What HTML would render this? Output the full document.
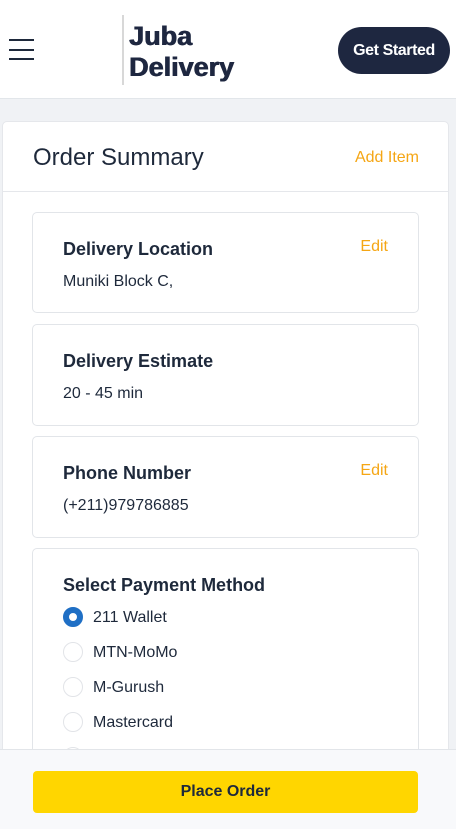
<!DOCTYPE html>
<html><head><meta charset="utf-8"><style>
*{box-sizing:border-box;margin:0;padding:0}
body{width:456px;height:829px;overflow:hidden;background:#f0f2f5;font-family:"Liberation Sans",sans-serif;color:#1e293b;position:relative}
.hdr{position:absolute;left:0;top:0;width:456px;height:99px;background:#fff;border-bottom:1px solid #e2e6ea}
.hb{position:absolute;left:9px;width:25px;height:2px;background:#1e293b}
.sep{position:absolute;left:122px;top:15px;width:2px;height:70px;background:#d8d8d8}
.logo{position:absolute;left:129px;top:21px;font-weight:900;font-size:27px;line-height:31px;color:#1e2740;text-shadow:0.6px 0 0 #1e2740,-0.3px 0 0 #1e2740}
.gs{position:absolute;left:338px;top:27px;width:112px;height:47px;border-radius:24px;background:#1e2740;color:#fff;font-size:16px;font-weight:bold;text-align:center;line-height:47px;letter-spacing:-0.4px}
.card{position:absolute;left:2px;top:121px;width:447px;height:700px;background:#fff;border:1px solid #e5e7eb;border-radius:5px}
.ch{position:absolute;left:0;top:0;width:100%;height:70px;border-bottom:1px solid #e5e7eb}
.ch h1{position:absolute;left:30px;top:22px;font-size:24px;font-weight:normal;color:#1e293b}
.ch a{position:absolute;right:29px;top:27px;font-size:16px;color:#f5a614}
.box{position:absolute;left:32px;width:387px;background:#fff;border:1px solid #e2e5e9;border-radius:5px}
.box h2{position:absolute;left:30px;top:26px;font-size:18px;font-weight:bold;color:#1e293b}
.box p{position:absolute;left:30px;top:60px;font-size:16px;color:#1e293b}
.box .e{position:absolute;right:30px;top:25px;font-size:16px;color:#f5a614}
.r{position:absolute;left:30px;font-size:16px;color:#1e293b}
.r i{position:absolute;left:0;top:-2px;width:20px;height:20px;border-radius:50%;border:1px solid #e2e4e8}
.r i.on{border:6px solid #1f6fc5}
.r span{position:absolute;left:30px;top:0;white-space:nowrap}
.ft{position:absolute;left:0;top:749px;width:456px;height:80px;background:#f8f9fb;border-top:1px solid #e2e5e9}
.btn{position:absolute;left:33px;top:21px;width:385px;height:42px;background:#ffd600;border-radius:4px;text-align:center;line-height:42px;font-size:16px;font-weight:bold;color:#1e293b}
</style></head><body>
<div class="hdr">
<div class="hb" style="top:39px"></div><div class="hb" style="top:49px"></div><div class="hb" style="top:58px"></div>
<div class="sep"></div>
<div class="logo">Juba<br>Delivery</div>
<div class="gs">Get Started</div>
</div>
<div class="card">
<div class="ch"><h1>Order Summary</h1><a>Add Item</a></div>
</div>
<div class="box" style="top:212px;height:101px"><h2>Delivery Location</h2><p>Muniki Block C,</p><span class="e">Edit</span></div>
<div class="box" style="top:324px;height:102px"><h2>Delivery Estimate</h2><p>20 - 45 min</p></div>
<div class="box" style="top:436px;height:102px"><h2>Phone Number</h2><p>(+211)979786885</p><span class="e">Edit</span></div>
<div class="box" style="top:548px;height:260px"><h2>Select Payment Method</h2>
<div class="r" style="top:60px"><i class="on"></i><span>211 Wallet</span></div>
<div class="r" style="top:95px"><i></i><span>MTN-MoMo</span></div>
<div class="r" style="top:130px"><i></i><span>M-Gurush</span></div>
<div class="r" style="top:165px"><i></i><span>Mastercard</span></div>
<div class="r" style="top:200px"><i></i><span>Visa</span></div>
</div>
<div class="ft"><div class="btn">Place Order</div></div>
</body></html>
